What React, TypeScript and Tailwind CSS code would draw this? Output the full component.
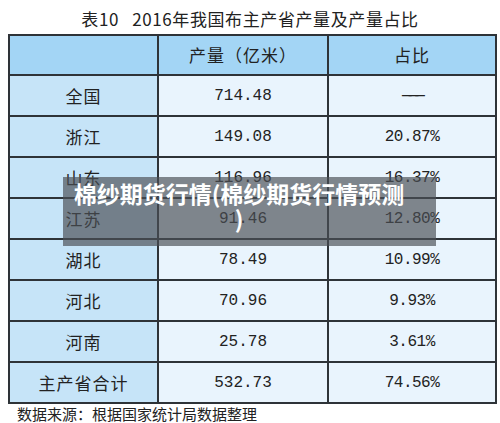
const rows: [string, string, string][] = [
  ["全国", "714.48", "——"],
  ["浙江", "149.08", "20.87%"],
  ["山东", "116.96", "16.37%"],
  ["江苏", "91.46", "12.80%"],
  ["湖北", "78.49", "10.99%"],
  ["河北", "70.96", "9.93%"],
  ["河南", "25.78", "3.61%"],
  ["主产省合计", "532.73", "74.56%"],
];

const cjk = "font-['Noto_Sans_CJK_SC',sans-serif]";
const num = "font-['Liberation_Mono','Noto_Sans_CJK_SC',monospace]";

export default function App() {
  return (
    <div className="relative h-[423px] w-[500px] overflow-hidden bg-white text-[#222]">
      <div className={`flex h-[34px] items-center justify-center pt-[4px] text-[17px] tracking-[0.6px] ${cjk}`}>
        表10&nbsp;&nbsp;&nbsp;2016年我国布主产省产量及产量占比
      </div>

      <table className="ml-[8px] w-[487px] table-fixed border-collapse">
        <colgroup>
          <col className="w-[149px]" />
          <col className="w-[170px]" />
          <col className="w-[168px]" />
        </colgroup>
        <thead>
          <tr className="h-[40px] bg-[#a3d5f5]">
            <th className="border-2 border-[#2e3338]" />
            <th className={`border-2 border-[#2e3338] text-[17px] font-normal tracking-[1px] ${cjk}`}>产量（亿米）</th>
            <th className={`border-2 border-[#2e3338] text-[17px] font-normal tracking-[1px] ${cjk}`}>占比</th>
          </tr>
        </thead>
        <tbody>
          {rows.map(([name, output, share]) => (
            <tr key={name} className="h-[41px]">
              <td className={`border-2 border-[#2e3338] bg-[#c6e4f8] text-center text-[17px] tracking-[1px] ${cjk}`}>{name}</td>
              <td className={`border-2 border-[#2e3338] bg-[#e9f4fd] text-center text-[16px] ${num}`}>{output}</td>
              <td className={`border-2 border-[#2e3338] bg-[#e9f4fd] text-center text-[16px] tracking-[-0.5px] ${num}`}>
                {share === "——" ? <span className="tracking-[-3px]">———</span> : share}
              </td>
            </tr>
          ))}
        </tbody>
      </table>

      <div className={`pl-[17px] text-[15px] leading-[20px] ${cjk}`}>数据来源：根据国家统计局数据整理</div>

      <div className="absolute left-[63px] top-[177px] h-[69px] w-[373px] bg-[rgba(75,80,85,0.68)] pl-[8px] pt-[4px]">
        <p className={`w-[336px] whitespace-nowrap text-center text-[23px] font-bold leading-[25px] text-white ${cjk}`}>
          棉纱期货行情(棉纱期货行情预测
          <br />)
        </p>
      </div>
    </div>
  );
}
